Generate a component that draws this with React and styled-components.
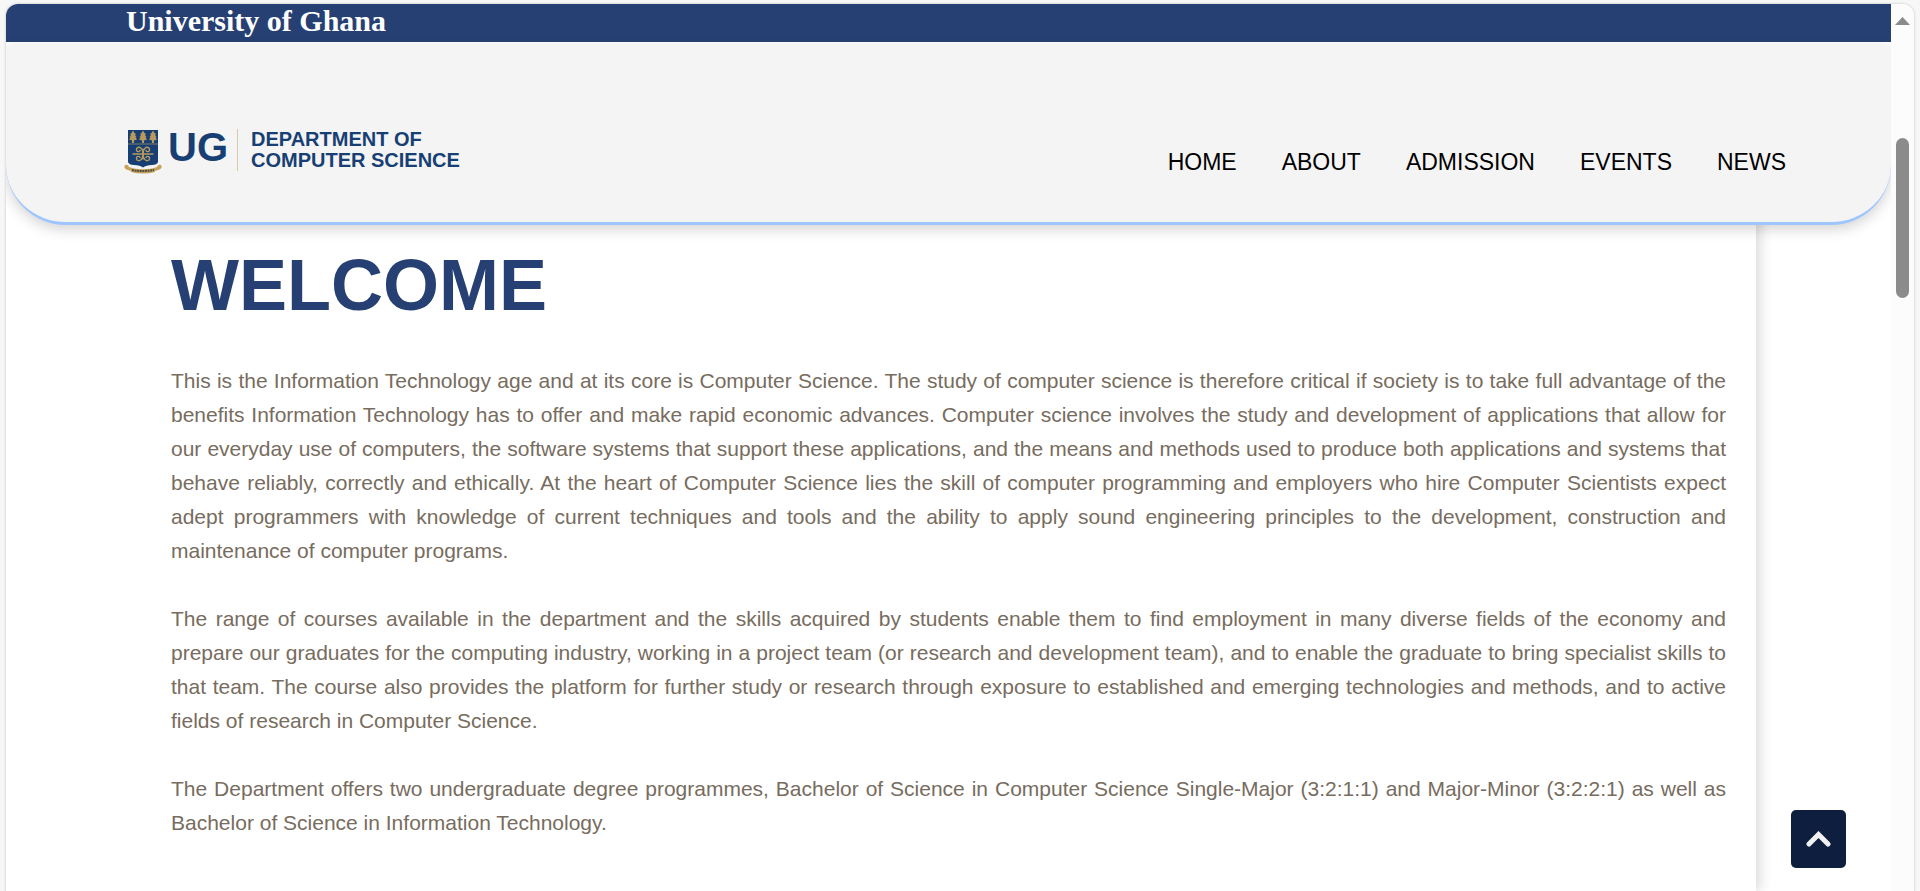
import React from 'react';
import styled, { createGlobalStyle } from 'styled-components';

const GlobalStyle = createGlobalStyle`
  * { box-sizing: border-box; }
  body {
    margin: 0;
    background: #f7f7f7;
    font-family: "Liberation Sans", Arial, sans-serif;
  }
`;

const Frame = styled.div`
  display: flex;
  margin: 4px 6px 0;
  min-height: calc(100vh - 4px);
  border-radius: 12px 12px 0 0;
  overflow: hidden;
  background: #fff;
  box-shadow: 0 0 2px 1px #dcdcdc;
`;

const Page = styled.div`
  flex: 1;
  min-width: 0;
  display: flex;
  flex-direction: column;
`;

const TopBar = styled.div`
  height: 38px;
  padding-left: 120px;
  background: #264073;
  color: #fff;
  font: bold 30px/34px "Liberation Serif", "Times New Roman", serif;
`;

const Header = styled.header`
  position: relative;
  z-index: 1;
  display: flex;
  justify-content: space-between;
  align-items: flex-end;
  height: 180px;
  margin-top: 3px;
  padding: 0 105px 47px 118px;
  background: #f4f4f4;
  border-bottom: 3px solid #9fc5ff;
  border-radius: 0 0 60px 60px;
  box-shadow: 0 4px 14px rgba(0, 0, 0, 0.18);
`;

const Logo = styled.a`
  display: flex;
  align-items: flex-start;
  color: #173f73;
  font-weight: bold;
  text-decoration: none;
`;

const Initials = styled.span`
  margin-left: 6px;
  font-size: 40px;
  line-height: 36px;
`;

const Department = styled.span`
  margin-left: 9px;
  padding-left: 13px;
  border-left: 1px solid #d8c9a8;
  font-size: 20px;
  line-height: 21px;
`;

const Nav = styled.nav`
  display: flex;
  gap: 45px;
`;

const NavLink = styled.a`
  color: #000;
  font-size: 23px;
  line-height: 26px;
  text-decoration: none;
`;

const Article = styled.main`
  flex: 1;
  margin: -60px 135px 0;
  padding: 79px 30px 6px;
  background: #fff;
  box-shadow: 4px 0 12px rgba(0, 0, 0, 0.15);
  clip-path: inset(0 -20px 0 0);
`;

const Title = styled.h1`
  margin: 0 0 38px;
  color: #264073;
  font-size: 72px;
  line-height: 82px;
`;

const Paragraph = styled.p`
  margin: 0 0 34px;
  color: #776c5e;
  font-size: 21px;
  line-height: 34px;
  text-align: justify;
`;

const TopButton = styled.button`
  position: fixed;
  right: 74px;
  bottom: 23px;
  width: 55px;
  height: 58px;
  display: flex;
  align-items: center;
  justify-content: center;
  padding: 0;
  border: 0;
  border-radius: 5px;
  background: #0d1e3e;
  cursor: pointer;
`;

const ScrollTrack = styled.div`
  position: relative;
  z-index: 2;
  width: 23px;
  display: flex;
  flex-direction: column;
  align-items: center;
  padding-top: 13px;
  background: #fcfcfc;
`;

const ScrollThumb = styled.div`
  width: 13px;
  height: 160px;
  margin-top: 113px;
  border-radius: 7px;
  background: #8b8b8b;
`;

const Tree = ({ x }) => (
  <g transform={`translate(${x} 0)`} fill="#b99a5c">
    <path d="M0 1.500 L1.500 4 L3 5 L2 6 L3.500 8 L2.500 8.500 L4 10.500 L1 11.500 V14 H-1 V11.500 L-4 10.500 L-2.500 8.500 L-3.500 8 L-2 6 L-3 5 L-1.500 4 Z" />
  </g>
);

const Crest = () => (
  <svg width="38" height="46" viewBox="0 0 38 46" aria-hidden="true">
    <path d="M4 1 H34 V33 Q33 36 28 36 Q22 36 19 38.500 Q16 36 10 36 Q5 36 4 33 Z" fill="#173f73" />
    <Tree x={9} />
    <Tree x={19} />
    <Tree x={29} />
    <path d="M4 15 H34" stroke="#7f7d68" strokeWidth="1" />
    <g fill="none" stroke="#b99a5c" strokeWidth="1.4" strokeLinecap="round">
      <path d="M9 25 H29 M19 20 V30" />
      <path d="M19 25 C19 20 22 17 25 19 C27 22 23 24 22 21.500 M19 25 C19 20 16 17 13 19 C11 22 15 24 16 21.500" />
      <path d="M19 25 C19 30 22 33 25 31 C27 28 23 26 22 28.500 M19 25 C19 30 16 33 13 31 C11 28 15 26 16 28.500" />
    </g>
    <path d="M1 36 Q4 35 5 38 L10 39.500 Q19 41 28 39.500 L33 38 Q34 35 37 36 Q39 40 34 41 L31 42 V43 Q19 46 7 43 V42 L4 41 Q-1 40 1 36 Z" fill="#c5a15b" />
    <path d="M8 41 Q19 43 30 41" fill="none" stroke="#4f503f" strokeWidth="2" strokeDasharray="2 0.6" />
  </svg>
);

const links = ['HOME', 'ABOUT', 'ADMISSION', 'EVENTS', 'NEWS'];

const paragraphs = [
  'This is the Information Technology age and at its core is Computer Science. The study of computer science is therefore critical if society is to take full advantage of the benefits Information Technology has to offer and make rapid economic advances. Computer science involves the study and development of applications that allow for our everyday use of computers, the software systems that support these applications, and the means and methods used to produce both applications and systems that behave reliably, correctly and ethically. At the heart of Computer Science lies the skill of computer programming and employers who hire Computer Scientists expect adept programmers with knowledge of current techniques and tools and the ability to apply sound engineering principles to the development, construction and maintenance of computer programs.',
  'The range of courses available in the department and the skills acquired by students enable them to find employment in many diverse fields of the economy and prepare our graduates for the computing industry, working in a project team (or research and development team), and to enable the graduate to bring specialist skills to that team. The course also provides the platform for further study or research through exposure to established and emerging technologies and methods, and to active fields of research in Computer Science.',
  'The Department offers two undergraduate degree programmes, Bachelor of Science in Computer Science Single-Major (3:2:1:1) and Major-Minor (3:2:2:1) as well as Bachelor of Science in Information Technology.',
];

export default function App() {
  return (
    <>
      <GlobalStyle />
      <Frame>
        <Page>
          <TopBar>University of Ghana</TopBar>
          <Header>
            <Logo href="#home">
              <Crest />
              <Initials>UG</Initials>
              <Department>
                DEPARTMENT OF
                <br />
                COMPUTER SCIENCE
              </Department>
            </Logo>
            <Nav>
              {links.map((label) => (
                <NavLink key={label} href={`#${label.toLowerCase()}`}>
                  {label}
                </NavLink>
              ))}
            </Nav>
          </Header>
          <Article>
            <Title>WELCOME</Title>
            {paragraphs.map((text) => (
              <Paragraph key={text}>{text}</Paragraph>
            ))}
          </Article>
        </Page>
        <ScrollTrack aria-hidden="true">
          <svg width="15" height="8" viewBox="0 0 15 8">
            <path d="M7.500 0 L15 8 H0 Z" fill="#8b8b8b" />
          </svg>
          <ScrollThumb />
        </ScrollTrack>
      </Frame>
      <TopButton aria-label="Back to top">
        <svg width="25" height="16" viewBox="0 0 25 16">
          <path d="M3 13 L12.500 3.500 L22 13" fill="none" stroke="#f1f1f1" strokeWidth="5" strokeLinecap="round" />
        </svg>
      </TopButton>
    </>
  );
}
